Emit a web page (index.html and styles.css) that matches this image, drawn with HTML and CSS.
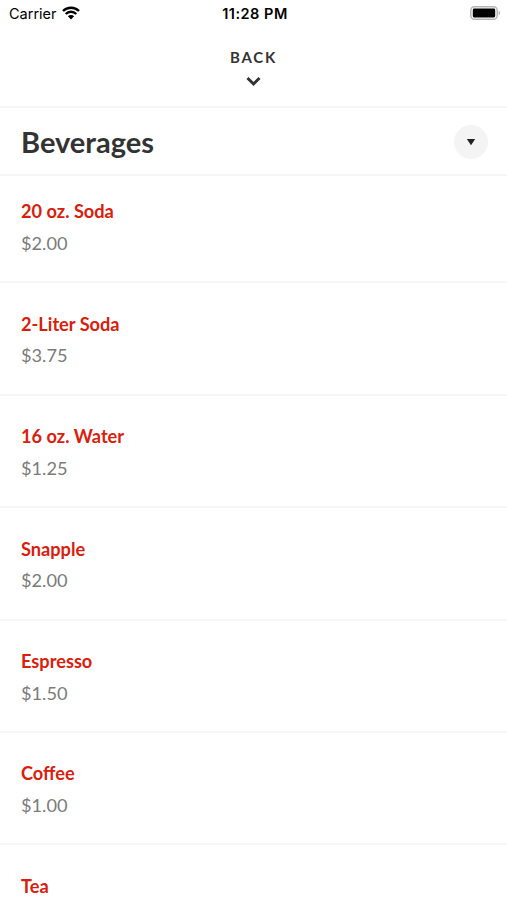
FILE: index.html
```html
<!DOCTYPE html>
<html lang="en">
<head>
<meta charset="utf-8">
<title>Beverages</title>
<link rel="stylesheet" href="styles.css">
</head>
<body>
<div class="status">
  <div class="carrier"><span>Carrier</span>
    <svg class="wifi" width="18" height="14" viewBox="0 0 18 14"><path d="M1 5a11.3 11.3 0 0 1 16 0M3.700 8a7.500 7.500 0 0 1 10.600 0" fill="none" stroke="#000" stroke-width="2.400"/><path d="M9 13.500 5.900 10.300a4.400 4.400 0 0 1 6.200 0z"/></svg>
  </div>
  <div class="time">11:28 PM</div>
  <svg class="battery" width="31" height="14" viewBox="0 0 31 14"><rect x=".8" y=".8" width="26.400" height="12.400" rx="3.600" fill="none" stroke="#b5b5b5" stroke-width="1.500"/><rect x="2.800" y="2.600" width="22.400" height="8.800" rx="1.300"/><path d="M28.600 4.700c2 .8 2 3.800 0 4.600z" fill="#b5b5b5"/></svg>
</div>
<header class="back"><span>BACK</span>
  <svg width="16" height="11" viewBox="0 0 16 11"><path d="M1.500 2l6 6 6-6" fill="none" stroke="#333" stroke-width="3"/></svg>
</header>
<div class="title"><h1>Beverages</h1>
  <div class="toggle"><svg width="10" height="8" viewBox="0 0 10 8"><path d="M.8 1h8.400L5 7.200z" fill="#222"/></svg></div>
</div>
<main>
  <div class="item"><h2>20 oz. Soda</h2><p>$2.00</p></div>
  <div class="item"><h2>2-Liter Soda</h2><p>$3.75</p></div>
  <div class="item"><h2>16 oz. Water</h2><p>$1.25</p></div>
  <div class="item"><h2>Snapple</h2><p>$2.00</p></div>
  <div class="item"><h2>Espresso</h2><p>$1.50</p></div>
  <div class="item"><h2>Coffee</h2><p>$1.00</p></div>
  <div class="item last"><h2>Tea</h2></div>
</main>
</body>
</html>
```
FILE: styles.css
```css
* { box-sizing: border-box; margin: 0; }
body { background: #fff; font-family: Lato, sans-serif; color: #333; }
.status { height: 28px; display: grid; grid-template-columns: 1fr auto 1fr; align-items: center; padding: 0 6px 2px 9px; font: 14.5px Inter, sans-serif; color: #000; }
.carrier { display: flex; align-items: center; gap: 6px; }
.carrier span { width: 47px; }
.time { font-weight: 600; font-size: 14.5px; letter-spacing: .5px; }
.battery { justify-self: end; }
.back { height: 80px; display: flex; flex-direction: column; align-items: center; padding-top: 19px; border-bottom: 2px solid #f6f6f6; font-size: 15px; line-height: 20px; font-weight: 700; letter-spacing: 1.8px; }
.back svg { margin-top: 9px; }
.title { height: 68px; display: flex; align-items: center; justify-content: space-between; padding: 1px 19px 0 21px; border-bottom: 2px solid #f6f6f6; }
h1 { font-size: 29px; font-weight: 700; line-height: 36px; margin-top: 1px; }
.toggle { width: 34px; height: 34px; border-radius: 50%; background: #f4f4f4; display: flex; align-items: center; justify-content: center; }
.item { height: 112.4px; padding: 28.4px 21px 0; border-bottom: 2px solid #f6f6f6; }
.item:first-child { height: 107.4px; padding-top: 23.4px; }
.last { height: 54px; border: 0; }
h2 { font-size: 18.2px; line-height: 24px; font-weight: 700; color: #d8200d; }
p { font-size: 18.2px; line-height: 24px; margin-top: 7.6px; color: #7b7b7b; }
```
